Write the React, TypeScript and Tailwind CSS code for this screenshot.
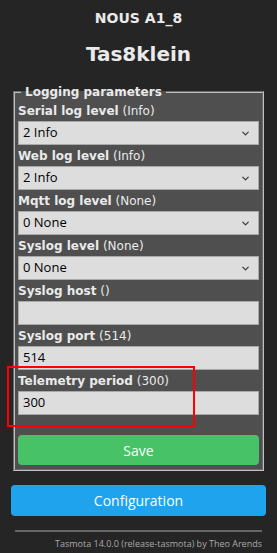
import { ChevronDown } from 'lucide-react'

const fields = [
  { label: 'Serial log level', hint: '(Info)', value: '2 Info', select: true },
  { label: 'Web log level', hint: '(Info)', value: '2 Info', select: true },
  { label: 'Mqtt log level', hint: '(None)', value: '0 None', select: true },
  { label: 'Syslog level', hint: '(None)', value: '0 None', select: true },
  { label: 'Syslog host', hint: '()', value: '', select: false },
  { label: 'Syslog port', hint: '(514)', value: '514', select: false },
  { label: 'Telemetry period', hint: '(300)', value: '300', select: false },
]

export default function App() {
  return (
    <div className="relative min-h-[553px] bg-[#252525] text-[#eaeaea] font-['DejaVu_Sans',sans-serif]">
      <div className="mx-[11px] pt-[10px]">
        <div className="text-center text-[14px] font-bold leading-[16px]">NOUS A1_8</div>
        <div className="mt-[17px] text-center text-[20px] font-bold leading-[22px]">Tas8klein</div>

        <fieldset className="mx-[2px] mt-[19px] border-2 border-[#c0c0c0] [border-style:groove] bg-[#4f4f4f] px-[3px] pb-[2px]">
          <legend className="ml-[3px] px-[4px] text-[12px] font-bold leading-[16px]">Logging parameters</legend>
          {fields.map((f) => (
            <div key={f.label}>
              <div className="h-[21px] pt-[3px] text-[12px] leading-[16px]">
                <b>{f.label}</b> <span>{f.hint}</span>
              </div>
              <div className="flex h-[24px] items-center justify-between border border-[#a9a9a9] bg-[#dddddd] px-[4px] text-[13px] text-black font-['Open_Sans',sans-serif]">
                <span>{f.value}</span>
                {f.select && <ChevronDown size={11} strokeWidth={2.5} className="mr-[3px] text-[#333]" />}
              </div>
            </div>
          ))}
          <button className="mt-[20px] mb-[2px] h-[30px] w-full rounded-[4px] bg-[#47c266] text-[14px] text-[#faffff] font-['Open_Sans',sans-serif]">
            Save
          </button>
        </fieldset>

        <button className="mt-[14px] h-[31px] w-full rounded-[4px] bg-[#1fa3ec] text-[14px] text-[#faffff] font-['Open_Sans',sans-serif]">
          Configuration
        </button>

        <div className="mx-[4px] mt-[14px] h-[2px] bg-[#666]" />
        <div className="mt-[5px] pr-[4px] text-right text-[9px] text-[#aaa] font-['Open_Sans',sans-serif]">
          Tasmota 14.0.0 (release-tasmota) by Theo Arends
        </div>
      </div>

      <div className="absolute left-[7px] top-[366px] h-[61px] w-[188px] border-2 border-[#ff0000]" />
    </div>
  )
}
